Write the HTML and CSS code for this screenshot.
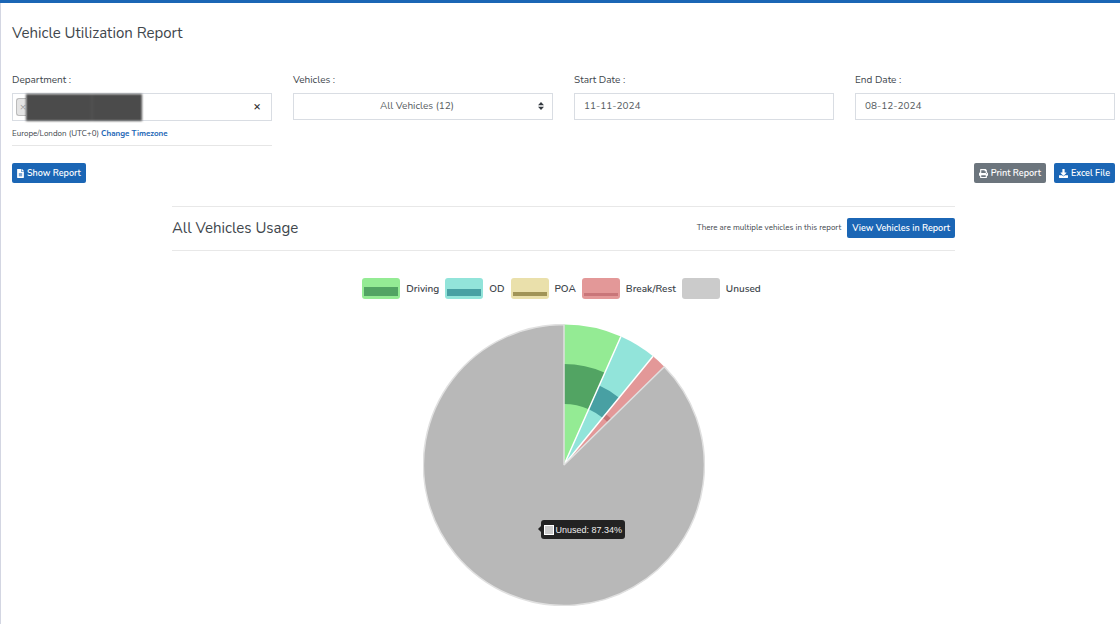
FILE: index.html
```html
<!DOCTYPE html>
<html lang="en">
<head>
<meta charset="utf-8">
<meta name="viewport" content="width=device-width, initial-scale=1">
<title>Vehicle Utilization Report</title>
<link rel="stylesheet" href="styles.css">
</head>
<body>
<main class="page">
  <h1 class="page-title">Vehicle Utilization Report</h1>

  <form class="filters">
    <div class="field">
      <label class="field-label" for="department">Department :</label>
      <div class="control tag-select">
        <button type="button" class="tag" aria-label="Remove department">×</button>
        <span class="redaction"></span>
        <input class="tag-input" id="department" type="text">
        <button type="button" class="clear" aria-label="Clear departments">×</button>
      </div>
      <p class="timezone">Europe/London (UTC+0) <a class="timezone-link" href="#">Change Timezone</a></p>
    </div>
    <div class="field">
      <label class="field-label" for="vehicles">Vehicles :</label>
      <div class="select-wrap">
        <select class="control select" id="vehicles"><option>All Vehicles (12)</option></select>
        <svg class="select-arrows" viewBox="0 0 6 8" aria-hidden="true"><path d="M0 3.2 3 0l3 3.2zM0 4.8h6L3 8z"/></svg>
      </div>
    </div>
    <div class="field">
      <label class="field-label" for="start">Start Date :</label>
      <input class="control" id="start" type="text" value="11-11-2024">
    </div>
    <div class="field">
      <label class="field-label" for="end">End Date :</label>
      <input class="control" id="end" type="text" value="08-12-2024">
    </div>
  </form>

  <div class="actions">
    <button type="button" class="btn btn-primary">
      <svg class="icon icon-file" viewBox="0 0 384 512" aria-hidden="true"><path d="M224 136V0H24C11 0 0 11 0 24v464c0 13 11 24 24 24h336c13 0 24-11 24-24V160H248c-13 0-24-11-24-24zm160-14v6H256V0h6c6 0 12 3 17 7l98 98c4 5 7 11 7 17z"/><path class="icon-lines" d="M96 230h192v190H96z"/></svg>
      Show Report
    </button>
    <div class="action-group">
      <button type="button" class="btn btn-secondary">
        <svg class="icon" viewBox="0 0 512 512" aria-hidden="true"><path d="M448 192V77c0-8-3-17-9-23L394 9c-6-6-14-9-23-9H96C78 0 64 14 64 32v160c-35 0-64 29-64 64v112c0 9 7 16 16 16h48v96c0 18 14 32 32 32h320c18 0 32-14 32-32v-96h48c9 0 16-7 16-16V256c0-35-29-64-64-64zm-64 256H128v-96h256v96zm0-224H128V64h192v48c0 9 7 16 16 16h48v96zm48 72c-13 0-24-11-24-24s11-24 24-24 24 11 24 24-11 24-24 24z"/></svg>
        Print Report
      </button>
      <button type="button" class="btn btn-primary">
        <svg class="icon" viewBox="0 0 512 512" aria-hidden="true"><path d="M216 0h80c13 0 24 11 24 24v168h88c18 0 27 21 14 34L270 378c-7 7-20 7-27 0L90 226c-13-13-4-34 14-34h88V24c0-13 11-24 24-24zm296 376v112c0 13-11 24-24 24H24c-13 0-24-11-24-24V376c0-13 11-24 24-24h147l49 49c20 20 52 20 72 0l49-49h147c13 0 24 11 24 24z"/></svg>
        Excel File
      </button>
    </div>
  </div>

  <section class="usage">
    <header class="usage-header">
      <h2 class="usage-title">All Vehicles Usage</h2>
      <span class="usage-note">There are multiple vehicles in this report</span>
      <button type="button" class="btn btn-primary">View Vehicles in Report</button>
    </header>

    <ul class="legend">
      <li class="legend-item"><span class="swatch driving"></span>Driving</li>
      <li class="legend-item"><span class="swatch od"></span>OD</li>
      <li class="legend-item"><span class="swatch poa"></span>POA</li>
      <li class="legend-item"><span class="swatch rest"></span>Break/Rest</li>
      <li class="legend-item"><span class="swatch unused"></span>Unused</li>
    </ul>

    <div class="chart">
      <svg class="pie" viewBox="-141 -141 282 282" role="img" aria-label="Vehicle usage by activity">
        <path fill="#94eb94" d="M0 0V-140.5A140.5 140.5 0 0 1 56.9-128.5z"/>
        <path fill="#52a463" d="M0-101A101 101 0 0 1 40.9-92.3L24.7-55.8A61 61 0 0 0 0-61z"/>
        <path fill="#92e4da" d="M0 0 56.9-128.5A140.5 140.5 0 0 1 89-108.7z"/>
        <path fill="#48a0a3" d="M35.2-79.5A87 87 0 0 1 55.1-67.3L38.6-47.2A61 61 0 0 0 24.7-55.8z"/>
        <path fill="#e39898" d="M0 0 89-108.7A140.5 140.5 0 0 1 100.3-98.3z"/>
        <path fill="#c47476" d="M41.8-51.1A66 66 0 0 1 47.1-46.2L43.6-42.7A61 61 0 0 0 38.6-47.2z"/>
        <path fill="none" stroke="#fff" stroke-width="1.5" d="M0 0 56.9-128.5M0 0 89-108.7"/>
        <path fill="#b8b8b8" stroke="#e0e0e0" stroke-width="1.5" stroke-linejoin="bevel" d="M0 0 100.3-98.3A140.5 140.5 0 1 1 0-140.5z"/>
      </svg>
      <div class="tooltip"><span class="tooltip-key"></span>Unused: 87.34%</div>
    </div>
  </section>
</main>
</body>
</html>
```
FILE: styles.css
```css
* { box-sizing: border-box; }

body {
  margin: 0;
  background: #fff;
  color: #40464c;
  font-family: Nunito, Lato, "Noto Sans", sans-serif;
  font-size: 10px;
  line-height: 16px;
  border-top: 3px solid #1b66b5;
}

button, input, select { font: inherit; color: inherit; }

.page {
  margin-bottom: 6px;
  padding: 18px 5px 18px 11px;
  border-left: 1px solid #d3d6e2;
}

.page-title {
  margin: 0 0 27px;
  font-size: 15px;
  font-weight: 400;
  line-height: 24px;
}

.filters {
  display: grid;
  grid-template-columns: repeat(4, minmax(0, 1fr));
  gap: 21px;
}

.field-label {
  display: block;
  margin-bottom: 5px;
}

.control {
  display: block;
  width: 100%;
  height: 27px;
  padding: 0 9px 1px;
  border: 1px solid #d9dde3;
  border-radius: 0;
  background: #fff;
  color: #555b60;
}

.tag-select {
  display: flex;
  align-items: center;
  height: 28px;
  padding: 0 10px 0 3px;
}

.tag {
  width: 10px;
  height: 18px;
  padding: 0 0 0 3px;
  border: 1px solid #bbb;
  border-right: 0;
  border-radius: 3px 0 0 3px;
  background: #e4e4e4;
  color: #999;
  line-height: 14px;
}

.redaction {
  width: 116px;
  height: 27px;
  background: linear-gradient(90deg, #4b4b4b 65px, #5a5a5a 66px, #4b4b4b 67px);
  filter: blur(1px);
}

.tag-input {
  flex: 1;
  min-width: 0;
  border: 0;
  outline: 0;
}

.clear {
  width: 8px;
  padding: 0 0 2px;
  border: 0;
  background: none;
  color: #333;
  font-size: 12px;
  font-weight: 700;
}

.timezone {
  margin: 0;
  padding: 5px 0 3px;
  border-bottom: 1px solid #e6e6e6;
  font-size: 8px;
}

.timezone-link {
  color: #1b66b5;
  font-weight: 700;
  text-decoration: none;
}

.select-wrap { position: relative; }

.select {
  appearance: none;
  padding-right: 21px;
  text-align-last: center;
}

.select-arrows {
  position: absolute;
  top: 9px;
  right: 9px;
  width: 6px;
  height: 8px;
  fill: #343a40;
}

.actions, .action-group, .usage-header, .legend, .legend-item, .btn {
  display: flex;
  align-items: center;
}

.actions {
  justify-content: space-between;
  margin: 17px 0 23px;
}

.action-group { gap: 8px; }

.btn {
  gap: 3px;
  height: 20px;
  padding: 0 5px;
  border: 0;
  border-radius: 2px;
  color: #fff;
  font-size: 9px;
  font-weight: 600;
  white-space: nowrap;
}

.btn-primary { background: #1b66b5; }
.btn-secondary { background: #6c757d; }

.icon {
  width: 9px;
  height: 9px;
  fill: currentColor;
}

.icon-file { width: 7px; }
.icon-lines { fill: #7ba6d4; }

.usage {
  width: 71%;
  margin: 0 auto;
}

.usage-header {
  gap: 6px;
  height: 45px;
  padding-bottom: 1px;
  border: solid #e8e8e8;
  border-width: 1px 0;
}

.usage-title {
  flex: 1;
  margin: 0;
  font-size: 15px;
  font-weight: 400;
  line-height: 24px;
}

.usage-note { font-size: 8px; }

.legend {
  justify-content: center;
  gap: 6px;
  margin: 27px 0 25px;
  padding: 0 4px 0 0;
  list-style: none;
  font-weight: 600;
}

.legend-item { gap: 6px; }

.swatch {
  display: flex;
  align-items: flex-end;
  width: 38px;
  height: 21px;
  padding: 0 2px 3px;
  border-radius: 3px;
}

.swatch::after {
  content: "";
  width: 100%;
}

.driving { background: #94eb94; }
.driving::after { height: 9px; background: #52a463; }
.od { background: #92e4da; }
.od::after { height: 7px; background: #48a0a3; }
.poa { background: #eae0ab; }
.poa::after { height: 4px; background: #a19457; }
.rest { background: #e39898; }
.rest::after { height: 3px; background: #c97679; }
.unused { background: #cbcbcb; }

.chart {
  position: relative;
  width: 282px;
  margin: 0 auto;
}

.pie {
  display: block;
  width: 100%;
}

.tooltip {
  position: absolute;
  top: 196px;
  left: 118px;
  display: flex;
  align-items: center;
  gap: 2px;
  height: 19px;
  padding: 0 3px;
  border-radius: 3px;
  background: #222;
  color: #eee;
  font-family: "Liberation Sans", Arial, sans-serif;
  font-size: 9px;
  white-space: nowrap;
}

.tooltip::before {
  content: "";
  position: absolute;
  top: 6px;
  right: 100%;
  border: solid transparent;
  border-width: 3px 3px 3px 0;
  border-right-color: #222;
}

.tooltip-key {
  width: 10px;
  height: 10px;
  border: 1px solid #fff;
  background: #cbcbcb;
}
```
